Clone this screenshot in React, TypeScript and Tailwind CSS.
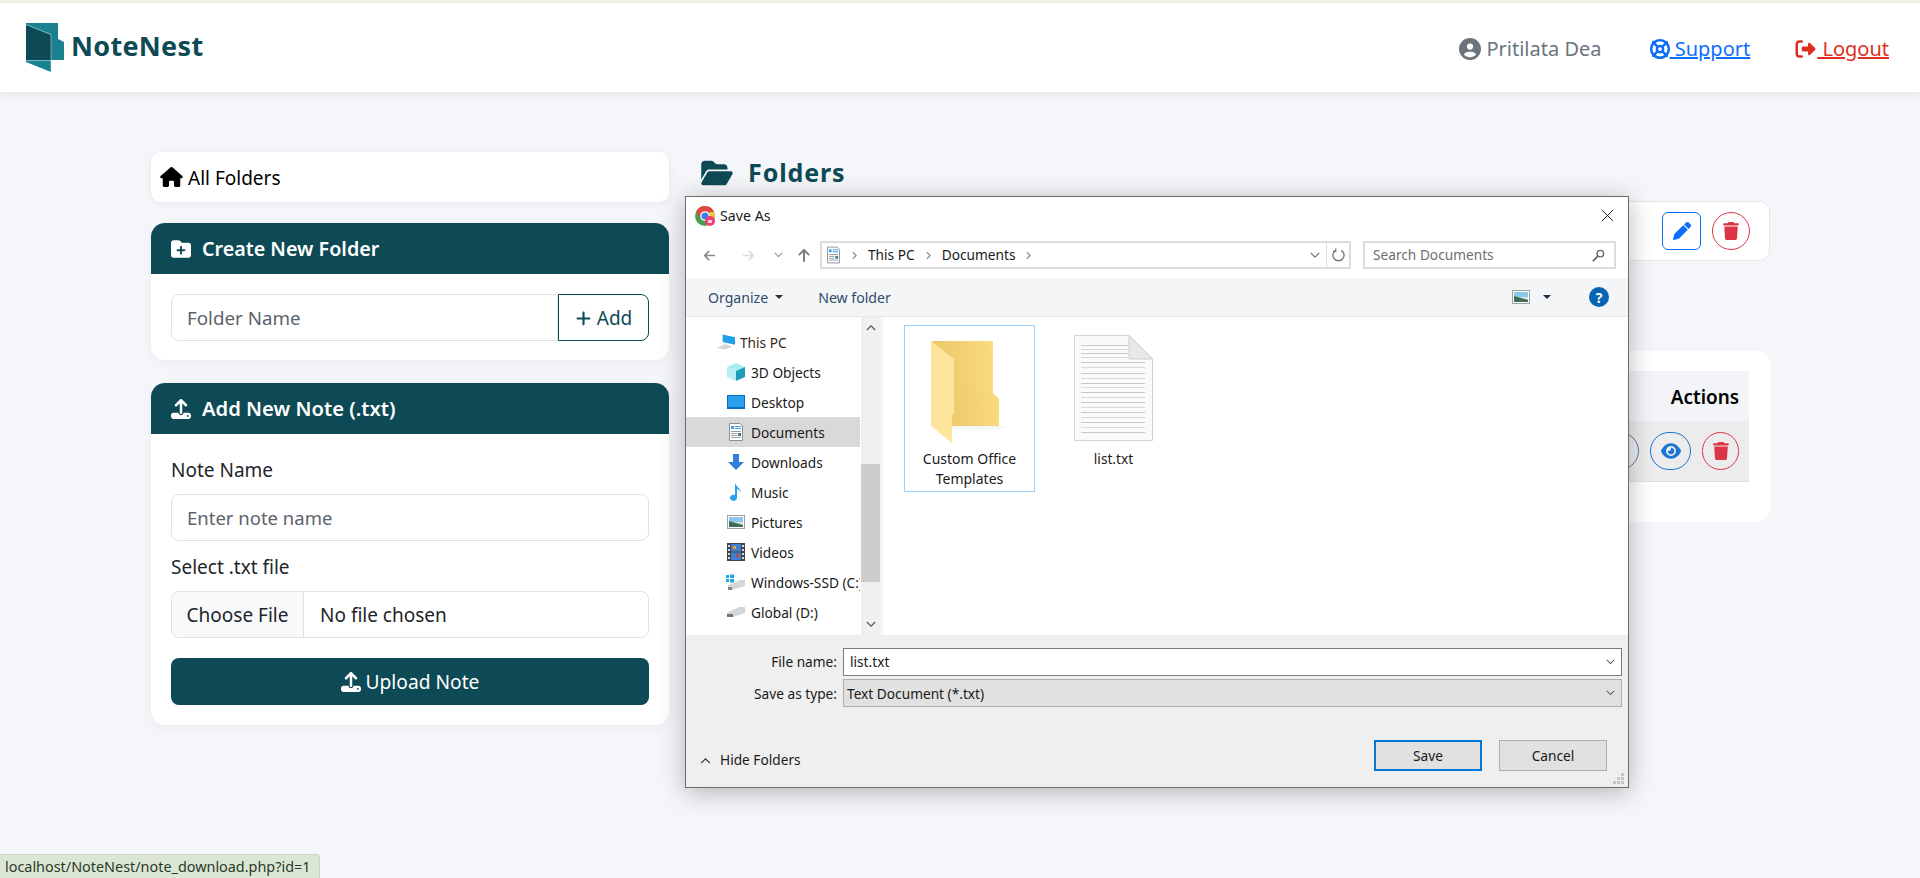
import React from "react";
import { FaHouse, FaFolderOpen, FaFolderPlus, FaUpload, FaCircleUser, FaLifeRing, FaRightFromBracket, FaPen, FaTrash, FaEye, FaPlus, FaArrowUp, FaArrowLeft, FaArrowRight } from "react-icons/fa6";

function Logo() {
  return (
    <svg viewBox="0 0 40 50" className="w-[40px] h-[50px] shrink-0">
      <path d="M1 1 H33 V17 L39 20 V38 H26 V50 L1 40 Z" fill="#1a8191" />
      <path d="M1 3 L26 13 V38 H1 Z" fill="#0e4a56" />
      <path d="M1 2.500 L26 12.500 V50 M1 38.500 H26" stroke="#d8eef0" strokeWidth="0.500" fill="none" />
    </svg>
  );
}

function Folder() {
  return (
    <svg viewBox="0 0 76 102" className="w-[76px] h-[102px] -ml-[2px]">
      <defs>
        <linearGradient id="fg" x1="0" x2="1" y1="0.6" y2="0.4">
          <stop offset="0" stopColor="#e8c566" />
          <stop offset="1" stopColor="#fbdc80" />
        </linearGradient>
      </defs>
      <path d="M21 85 H76 L68 88 H21 Z" fill="#f6f6f6" />
      <path d="M0 0 H62 V52 L68 58 V85 H21 V30 Z" fill="url(#fg)" />
      <path d="M0 0 L23 18 V72 L21 75 V102 L0 85 Z" fill="#fde69c" />
    </svg>
  );
}

function TextFile() {
  const ys = [105, 117, 128, 140, 155, 172, 190, 205, 218, 230, 245, 262, 275, 290, 305, 320, 335, 350, 365];
  return (
    <svg viewBox="0 0 79 106" className="w-[79px] h-[106px]">
      <path d="M0.5 0.5 H55 L78.500 24 V105.500 H0.500 Z" fill="#fafafa" stroke="#d4d4d4" />
      {ys.map((z, i) => (
        <rect key={z} x="7" y={Math.round((z - 75) / 3)} width={z < 145 ? 47 : 64} height="1" fill={i % 2 ? "#d8d8d8" : "#c8c8c8"} />
      ))}
      <path d="M55 0.500 V24 H78.500 Z" fill="#e8e8e8" stroke="#cfcfcf" />
    </svg>
  );
}

function DocIcon({ className }: { className?: string }) {
  return (
    <svg viewBox="0 0 14 18" className={className}>
      <path d="M0.5 0.5 H11 L13.5 3 V17.5 H0.5 Z" fill="#fff" stroke="#8a8f94" />
      <rect x="2" y="3" width="3" height="3" fill="#3aa0e8" />
      <rect x="6" y="3" width="6" height="1" fill="#3aa0e8" />
      <rect x="6" y="5" width="6" height="1" fill="#3aa0e8" />
      <rect x="2" y="8" width="10" height="1" fill="#9aa0a6" />
      <rect x="2" y="10" width="6" height="1" fill="#9aa0a6" />
      <rect x="9" y="10" width="3" height="3" fill="#4a7a86" />
      <rect x="2" y="12" width="6" height="1" fill="#9aa0a6" />
      <rect x="2" y="14" width="10" height="1" fill="#9aa0a6" />
    </svg>
  );
}

const Pic = ({ className }: { className?: string }) => (
  <svg viewBox="0 0 18 14" className={className}>
    <rect x="0.5" y="0.5" width="17" height="13" fill="#fff" stroke="#a0a0a0" />
    <rect x="2" y="2" width="14" height="5" fill="#8cc8ee" />
    <rect x="2" y="7" width="14" height="5" fill="#d8e4d8" />
    <path d="M2 6 L9 8 L16 10 V12 H2 Z" fill="#3f6e5a" />
  </svg>
);

const navItems: { label: string; icon: React.ReactNode; active?: boolean }[] = [
  { label: "3D Objects", icon: (
    <svg viewBox="0 0 18 18" className="w-[18px] h-[18px]">
      <path d="M9 0 L18 4 L9 8 L0 4 Z" fill="#a6ecf2" />
      <path d="M0 4 L9 8 V18 L0 14 Z" fill="#b8eef2" />
      <path d="M18 4 L9 8 V18 L18 14 Z" fill="#1d9db8" />
    </svg>
  ) },
  { label: "Desktop", icon: (
    <svg viewBox="0 0 18 14" className="w-[18px] h-[14px]">
      <rect width="18" height="14" fill="#0b6fc4" />
      <rect x="1" y="1" width="16" height="11" fill="#2ba0f0" />
    </svg>
  ) },
  { label: "Documents", active: true, icon: <DocIcon className="w-[14px] h-[18px]" /> },
  { label: "Downloads", icon: (
    <svg viewBox="0 0 16 16" className="w-[16px] h-[16px]"><path d="M5 0 H11 V8 H16 L8 16 L0 8 H5 Z" fill="#2d7fd8" /></svg>
  ) },
  { label: "Music", icon: (
    <svg viewBox="0 0 12 18" className="w-[12px] h-[18px]"><path d="M5 0 C6 4 11 5 11 10 C10 7 8 6 7 6 V15 A3.5 3 0 1 1 5 12 Z" fill="#2aa0ee" /></svg>
  ) },
  { label: "Pictures", icon: <Pic className="w-[18px] h-[14px]" /> },
  { label: "Videos", icon: (
    <svg viewBox="0 0 18 18" className="w-[18px] h-[18px]">
      <rect width="18" height="18" fill="#444" />
      <rect x="4" y="1" width="10" height="7.500" fill="#3f7fd0" />
      <rect x="4" y="9.500" width="10" height="7.500" fill="#3f7fd0" />
      <rect x="6" y="3" width="3" height="3" fill="#e2a13a" />
      <rect x="9" y="11" width="3" height="3" fill="#c9483a" />
      <path d="M1 2h2v2H1zM1 6h2v2H1zM1 10h2v2H1zM1 14h2v2H1zM15 2h2v2h-2zM15 6h2v2h-2zM15 10h2v2h-2zM15 14h2v2h-2z" fill="#ddd" />
    </svg>
  ) },
  { label: "Windows-SSD (C:)", icon: (
    <svg viewBox="0 0 20 16" className="w-[20px] h-[16px] shrink-0 -ml-[1px]">
      <path d="M0 1h3v3H0zM4 0.500h4v3.500H4zM0 5h3v3H0zM4 5h4v3.500H4z" fill="#1ea7e8" />
      <path d="M2 11 L14 6 H19 V12 L6 16 H2 Z" fill="#d4d6d6" />
      <path d="M2 13 H6 V16 H2 Z" fill="#7d8484" />
    </svg>
  ) },
  { label: "Global (D:)", icon: (
    <svg viewBox="0 0 18 10" className="w-[18px] h-[10px]">
      <path d="M0 6 L12 0 H18 V6 L6 10 H0 Z" fill="#d4d6d6" />
      <path d="M0 7 H6 V10 H0 Z" fill="#6f7676" />
    </svg>
  ) },
];

function SmallChevron({ up, className }: { up?: boolean; className?: string }) {
  return (
    <svg viewBox="0 0 12 8" className={className} fill="none" stroke="currentColor" strokeWidth="1.400">
      <path d={up ? "M1 7 L6 2 L11 7" : "M1 1 L6 6 L11 1"} />
    </svg>
  );
}

function Crumb({ className }: { className?: string }) {
  return (
    <svg viewBox="0 0 6 10" className={`w-[5px] h-[9px] text-[#8a8a8a] ${className ?? ""}`} fill="none" stroke="currentColor" strokeWidth="1.500">
      <path d="M1 1 L5 5 L1 9" />
    </svg>
  );
}

function SaveDialog() {
  return (
    <div className="absolute left-[685px] top-[196px] w-[944px] h-[592px] bg-white border border-[#6b6b6b] shadow-[0_4px_24px_rgba(0,0,0,0.28)] flex flex-col text-[13.700px] text-[#1a1a1a] [font-family:'Noto_Sans','Open_Sans',sans-serif]">
      <div className="h-[37px] flex items-center pl-[9px] pr-[14px] shrink-0">
        <svg viewBox="0 0 20 20" className="w-[20px] h-[20px]">
          <circle cx="10" cy="10" r="10" fill="#4c9f50" />
          <path d="M10 0 A10 10 0 0 1 19 6 H10 L5 12 L1.500 5 A10 10 0 0 1 10 0 Z" fill="#e2453a" />
          <path d="M19 6 A10 10 0 0 1 11 20 L14.500 11 V6 Z" fill="#f7c43d" />
          <circle cx="10" cy="10" r="4.800" fill="#fff" />
          <circle cx="10" cy="10" r="3.500" fill="#3b7de8" />
          <circle cx="15" cy="15" r="5" fill="#ec3f7c" />
          <rect x="13" y="14" width="4" height="3" fill="#f9c9da" />
        </svg>
        <span className="ml-[5px] text-[14.200px]">Save As</span>
        <svg viewBox="0 0 14 14" className="w-[13px] h-[13px] ml-auto" stroke="#111" strokeWidth="1"><path d="M1 1 L13 13 M13 1 L1 13" /></svg>
      </div>
      <div className="h-[44px] flex items-start pt-[7px] pl-[16px] shrink-0">
        <div className="h-[28px] flex items-center">
          <FaArrowLeft className="w-[15px] h-[13px] text-[#8a8a8a]" />
          <FaArrowRight className="w-[15px] h-[13px] text-[#dcdcdc] ml-[24px]" />
          <SmallChevron className="w-[9px] h-[6px] text-[#8a8a8a] ml-[18px]" />
          <FaArrowUp className="w-[12px] h-[15px] text-[#7a7a7a] ml-[15px]" />
        </div>
        <div className="ml-[10px] w-[531px] h-[28px] border-2 border-[#dcdcdc] flex items-center">
          <DocIcon className="w-[13px] h-[18px] ml-[5px]" />
          <Crumb className="ml-[12px]" />
          <span className="ml-[11px]">This PC</span>
          <Crumb className="ml-[11px]" />
          <span className="ml-[11px]">Documents</span>
          <Crumb className="ml-[11px]" />
          <SmallChevron className="w-[10px] h-[7px] text-[#777] ml-auto mr-[6px]" />
          <div className="h-full w-[23px] border-l border-[#dcdcdc] flex items-center justify-center text-[#777]">
            <svg viewBox="0 0 14 14" className="w-[13px] h-[14px]" fill="none" stroke="currentColor" strokeWidth="1.400"><path d="M4 2 A6 6 0 1 0 10 2 M4 0 V3 H1" /></svg>
          </div>
        </div>
        <div className="ml-[12px] w-[253px] h-[28px] border-2 border-[#dcdcdc] flex items-center pl-[8px] pr-[9px] text-[#6f6f6f]">
          <span>Search Documents</span>
          <svg viewBox="0 0 14 14" className="w-[13px] h-[13px] ml-auto" fill="none" stroke="#666" strokeWidth="1.500"><circle cx="9" cy="5" r="3.500" /><path d="M6 8 L1 13" strokeWidth="2" /></svg>
        </div>
      </div>
      <div className="h-[39px] bg-[#f4f5f7] border-b border-[#e8e8e8] flex items-center pl-[22px] pr-[19px] text-[#2e4a6b] text-[14.100px] shrink-0">
        <span className="mt-[2px]">Organize</span>
        <span className="ml-[7px] w-0 h-0 border-x-[4px] border-x-transparent border-t-[4px] border-t-[#333]" />
        <span className="ml-[35px] mt-[2px]">New folder</span>
        <Pic className="w-[18px] h-[14px] ml-auto" />
        <span className="ml-[13px] w-0 h-0 border-x-[4px] border-x-transparent border-t-[4px] border-t-[#1f2f4a]" />
        <span className="ml-[38px] w-[20px] h-[20px] rounded-full bg-[#0a64b4] text-white flex items-center justify-center font-bold text-[14px]">?</span>
      </div>
      <div className="flex-1 flex min-h-0">
        <div className="w-[174px] pt-[10px] shrink-0 overflow-hidden">
          <div className="h-[30px] flex items-center pl-[31px] gap-[4px]">
            <svg viewBox="0 0 20 16" className="w-[19px] h-[16px]"><path d="M6 0 L19 3 V11 L6 8 Z" fill="#1f9fe8" /><path d="M0 14 L9 10 L16 13 L8 16 Z" fill="#d5d5d5" /></svg>
            <span className="text-[#3a2a14] mt-[2px]">This PC</span>
          </div>
          {navItems.map((n) => (
            <div key={n.label} className={`h-[30px] flex items-center pl-[41px] gap-[6px] whitespace-nowrap ${n.active ? "bg-[#d9d9d9]" : ""}`}>
              <span className="w-[18px] flex items-center justify-center shrink-0">{n.icon}</span>
              <span className="mt-[2px]">{n.label}</span>
            </div>
          ))}
        </div>
        <div className="w-[19px] ml-[1px] bg-[#f0f0f0] flex flex-col items-center justify-between py-[7px] relative shrink-0">
          <SmallChevron up className="w-[10px] h-[7px] text-[#555]" />
          <div className="absolute left-0 right-0 top-[147px] h-[118px] bg-[#cdcdcd]" />
          <SmallChevron className="w-[10px] h-[7px] text-[#555]" />
        </div>
        <div className="flex-1 border-l-[3px] border-[#f4f4f4] pt-[8px] pl-[21px] flex items-start gap-[39px]">
          <div className="w-[131px] h-[167px] border border-[#99d1ff] flex flex-col items-center pt-[15px]">
            <Folder />
            <div className="text-center text-[14px] leading-[20px] mt-[6px]">Custom Office<br />Templates</div>
          </div>
          <div className="flex flex-col items-center pt-[10px] w-[79px]">
            <TextFile />
            <div className="leading-[20px] mt-[8px]">list.txt</div>
          </div>
        </div>
      </div>
      <div className="h-[152px] bg-[#efefef] relative shrink-0 pr-[6px]">
        <div className="flex items-center h-[28px] pt-0 mt-[13px]">
          <span className="w-[151px] text-right">File name:</span>
          <div className="ml-[6px] flex-1 h-[28px] bg-white border border-[#7a7a7a] flex items-center pl-[6px] pr-[6px]">
            <span>list.txt</span>
            <SmallChevron className="w-[9px] h-[6px] ml-auto text-[#555]" />
          </div>
        </div>
        <div className="flex items-center h-[28px] mt-[3px]">
          <span className="w-[151px] text-right mt-[2px]">Save as type:</span>
          <div className="ml-[6px] flex-1 h-[28px] bg-[#e1e1e1] border border-[#adadad] flex items-center pl-[3px] pr-[6px]">
            <span className="mt-[2px]">Text Document (*.txt)</span>
            <SmallChevron className="w-[9px] h-[6px] ml-auto text-[#555]" />
          </div>
        </div>
        <div className="flex items-center mt-[33px] pl-[14px] pr-[15px]">
          <SmallChevron up className="w-[11px] h-[7px] text-[#333] mr-[9px] mt-[9px]" />
          <span className="mt-[9px]">Hide Folders</span>
          <button className="ml-auto w-[108px] h-[31px] bg-[#e1e1e1] border-2 border-[#0078d7] text-center pt-[2px]">Save</button>
          <button className="ml-[17px] w-[108px] h-[31px] bg-[#e1e1e1] border border-[#adadad] text-center pt-[2px]">Cancel</button>
        </div>
        <svg viewBox="0 0 12 12" className="absolute right-[3px] bottom-[2px] w-[12px] h-[12px]" fill="#c4c4c4">
          <path d="M8 0h3v3H8zM4 4h3v3H4zM8 4h3v3H8zM0 8h3v3H0zM4 8h3v3H4zM8 8h3v3H8z" />
        </svg>
      </div>
    </div>
  );
}

export default function App() {
  return (
    <div className="relative w-full h-[878px] overflow-hidden bg-[#f4f6fa] [font-family:'Noto_Sans','Open_Sans',sans-serif] text-[#212529]">
      <div className="h-[3px] bg-[#f0f3e6]" />
      <header className="h-[89px] bg-white shadow-[0_2px_8px_rgba(0,0,0,0.08)] flex items-center pl-[25px] pr-[31px]">
        <div className="flex items-center gap-[6px] -mt-[1px]">
          <Logo />
          <span className="text-[27px] font-bold text-[#0e4a56] tracking-[0.3px] -mt-[2px]">NoteNest</span>
        </div>
        <div className="ml-auto flex items-center text-[20px] mt-[3px]">
          <span className="flex items-center gap-[5px] text-[#6c757d]"><FaCircleUser className="w-[22px] h-[22px]" />Pritilata Dea</span>
          <a className="ml-[48px] flex items-center text-[#0d6efd]"><FaLifeRing className="w-[20px] h-[20px]" /><span className="underline whitespace-pre"> Support</span></a>
          <a className="ml-[44px] flex items-center text-[#dc2f20]"><FaRightFromBracket className="w-[23px] h-[20px]" /><span className="underline whitespace-pre"> Logout</span></a>
        </div>
      </header>

      <div className="flex pl-[151px] pt-[60px]">
        <aside className="w-[518px] shrink-0 flex flex-col">
          <div className="h-[50px] bg-white rounded-[10px] shadow-[0_2px_8px_rgba(0,0,0,0.06)] flex items-center pl-[9px] gap-[5px] text-[19px] text-black">
            <FaHouse className="w-[23px] h-[20px]" /><span className="mt-[2px]">All Folders</span>
          </div>
          <section className="mt-[21px] bg-white rounded-[14px] shadow-[0_4px_14px_rgba(0,0,0,0.04)] overflow-hidden">
            <div className="h-[51px] bg-[#0e4a56] text-white flex items-center pl-[20px] gap-[11px] text-[19.700px] font-semibold">
              <FaFolderPlus className="w-[20px] h-[20px]" />Create New Folder
            </div>
            <div className="p-[20px] flex h-[86px]">
              <div className="flex-1 h-[47px] border border-[#dee2e6] rounded-l-[8px] flex items-center pl-[15px] pt-[2px] text-[18.800px] text-[#5c636a]">Folder Name</div>
              <div className="w-[91px] h-[47px] border border-[#0e4a56] rounded-r-[8px] flex items-center justify-center gap-[5px] pt-[2px] text-[19px] text-[#0e4a56]"><FaPlus className="w-[17px] h-[17px]" />Add</div>
            </div>
          </section>
          <section className="mt-[23px] bg-white rounded-[14px] shadow-[0_4px_14px_rgba(0,0,0,0.04)] overflow-hidden">
            <div className="h-[51px] bg-[#0e4a56] text-white flex items-center pl-[20px] gap-[11px] text-[20.200px] font-semibold">
              <FaUpload className="w-[20px] h-[20px]" />Add New Note (.txt)
            </div>
            <div className="px-[20px] pt-[23px] pb-[20px]">
              <div className="text-[19px] leading-[27px]">Note Name</div>
              <div className="mt-[10px] h-[47px] border border-[#dee2e6] rounded-[8px] flex items-center pl-[15px] pt-[1px] text-[18.500px] text-[#5c636a]">Enter note name</div>
              <div className="mt-[13px] text-[19px] leading-[27px]">Select .txt file</div>
              <div className="mt-[10px] h-[47px] border border-[#dee2e6] rounded-[8px] flex items-center text-[19px] overflow-hidden">
                <div className="h-full w-[132px] bg-[#f8f9fa] border-r border-[#dee2e6] flex items-center justify-center pt-[2px]">Choose File</div>
                <div className="pl-[16px] pt-[2px]">No file chosen</div>
              </div>
              <div className="mt-[20px] h-[47px] bg-[#0e4a56] rounded-[8px] text-white flex items-center justify-center gap-[5px] text-[19.200px]">
                <FaUpload className="w-[20px] h-[20px]" /><span className="mt-[2px]">Upload Note</span>
              </div>
            </div>
          </section>
        </aside>

        <main className="ml-[31px] w-[1070px]">
          <h2 className="flex items-center gap-[14px] h-[38px] pt-[3px] text-[25px] font-bold text-[#0e4a56] tracking-[0.9px]">
            <FaFolderOpen className="w-[34px] h-[28px]" />Folders
          </h2>
          <div className="mt-[11px] h-[60px] bg-white border border-[#e4e7ec] rounded-[10px] flex items-center justify-end pr-[19px] gap-[11px]">
            <span className="w-[39px] h-[38px] border border-[#0d6efd] rounded-[6px] flex items-center justify-center text-[#0d6efd]"><FaPen className="w-[18px] h-[18px]" /></span>
            <span className="w-[38px] h-[38px] border border-[#dc3545] rounded-full flex items-center justify-center text-[#dc3545]"><FaTrash className="w-[16px] h-[18px]" /></span>
          </div>
          <div className="mt-[90px] h-[171px] bg-white rounded-[14px] pl-[20px] pr-[21px] pt-[20px]">
            <div className="h-[50px] bg-[#f2f4f8] flex items-center justify-end pr-[10px] pt-[2px] text-[18.900px] font-semibold text-black">Actions</div>
            <div className="h-[61px] bg-[#ececec] border-b border-[#dee2e6] flex items-center justify-end pr-[10px] gap-[11px]">
              <span className="w-[41px] h-[38px] border border-[#6c757d] bg-[#e8eef4] rounded-full" />
              <span className="w-[41px] h-[38px] border border-[#1976d2] rounded-full flex items-center justify-center text-[#1976d2]"><FaEye className="w-[20px] h-[18px]" /></span>
              <span className="w-[37px] h-[38px] border border-[#dc3545] rounded-full flex items-center justify-center text-[#dc3545]"><FaTrash className="w-[16px] h-[18px]" /></span>
            </div>
          </div>
        </main>
      </div>

      <SaveDialog />

      <div className="absolute left-0 bottom-0 h-[24px] w-[320px] bg-[#dce6d4] border-t border-r border-[#cfd6c8] rounded-tr-[4px] pl-[5px] flex items-center text-[14.400px] text-[#2a3a2a] whitespace-nowrap">localhost/NoteNest/note_download.php?id=1</div>
    </div>
  );
}
